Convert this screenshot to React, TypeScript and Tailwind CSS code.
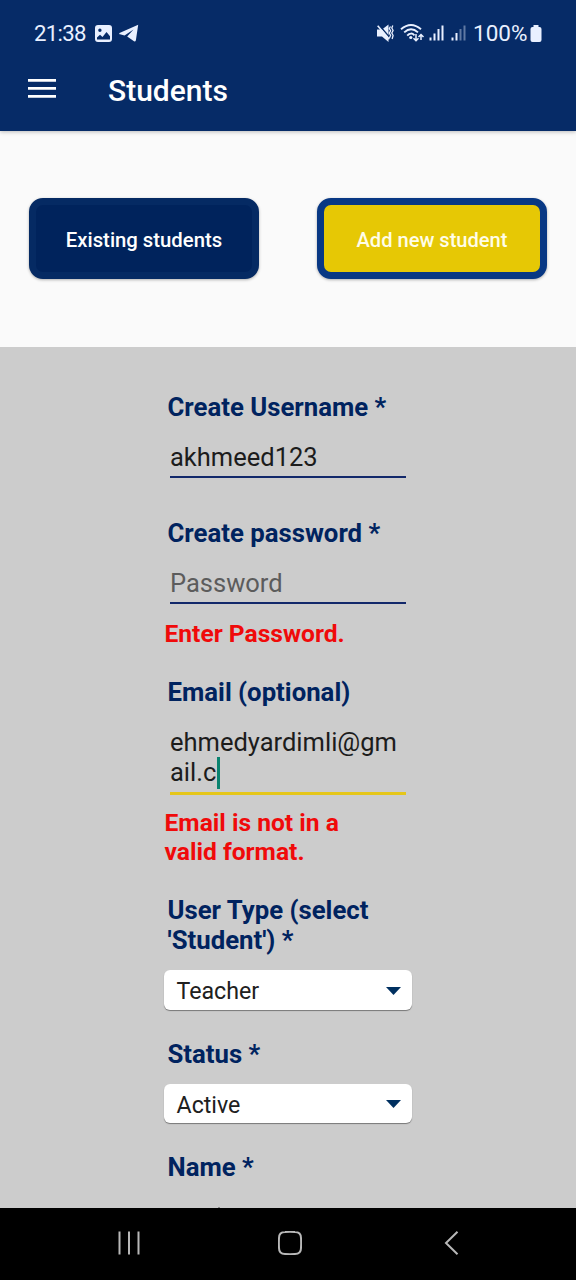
import type { ReactNode } from "react";

function StatusBar() {
  return (
    <div className="flex h-[66px] items-center justify-between pl-[34px] pr-[33px] text-[#e9f0ff]">
      <div className="flex items-center">
        <span className="-mt-px w-[61px] whitespace-nowrap text-[22.200px] leading-[30px] tracking-[-0.700px]">21:38</span>
        <svg width="17" height="17" viewBox="0 0 17 17" fill="currentColor">
          <path fillRule="evenodd" d="M3 0h11a3 3 0 0 1 3 3v11a3 3 0 0 1-3 3H3a3 3 0 0 1-3-3V3a3 3 0 0 1 3-3ZM4.900 3.500a1.700 1.700 0 1 0 0 3.400a1.700 1.700 0 0 0 0-3.400ZM2 14.500h13v-3.300L11.500 7L7.500 12L5 9.800L2 12.500Z" />
        </svg>
        <svg className="ml-[7px]" width="20" height="18" viewBox="0 0 20 18" fill="currentColor">
          <path d="M19.200 .8L.5 9Q-.2 10 1 10.300L5.500 11.500L14.500 5.500L8.200 12.600L15 17.300Q16.400 17.800 16.900 16.200Z" />
        </svg>
      </div>
      <div className="flex items-center">
        <svg width="97" height="24" viewBox="375.500 21 97 24">
          <path fill="currentColor" d="M376.500 29.500h5l6.500-5v17.500l-6.500-5.500h-5Z" />
          <path d="M378.500 25l12 14" stroke="#062b67" strokeWidth="1.500" />
          <path d="M377.200 25.800l11.600 13.500" stroke="currentColor" strokeWidth="1.600" />
          <g fill="none" stroke="currentColor" strokeWidth="1.300">
            <path d="M390 26.500l-1.200 2l1.300 2.300l-1.300 2.300l1.300 2.300l-1.200 2.600" />
            <path d="M392.300 25.500l-1 2.500l1.300 2.500l-1.300 2.500l1.300 2.500l-1 3.500" />
          </g>
          <g fill="none" stroke="currentColor" strokeWidth="1.900">
            <path d="M400.500 29.300Q410.500 20.700 420.500 29.300" />
            <path d="M403.700 32.400Q410.500 26.300 417.500 32.400" />
            <path d="M406.700 35.600Q410.500 31.700 414 35.300" />
          </g>
          <circle cx="410.300" cy="37.500" r="1.600" fill="currentColor" />
          <g fill="none" stroke="currentColor" strokeWidth="1.500">
            <path d="M415.500 34v7M413 38.300l2.500 2.500l2.500-2.500M420.500 40v-5.500M418 37l2.500-2.500l2.500 2.500" />
          </g>
          <g fill="currentColor">
            <path d="M429 37.500h2v3h-2zM433 33.500h2v7h-2zM437 29h2v11.500h-2zM441 25.500h2v15h-2z" />
            <path d="M451 37.500h2v3h-2zM455 33h2v7.500h-2z" />
            <path d="M459 29h2v11.500h-2zM463 25.500h2v15h-2z" opacity=".4" />
          </g>
        </svg>
        <span className="w-[57px] whitespace-nowrap text-[22.500px] leading-[30px]">100%</span>
        <svg className="mr-px" width="12" height="17" viewBox="0 0 12 17" fill="currentColor">
          <path d="M3.500 0h5v2h1A2 2 0 0 1 11.500 4v11a2 2 0 0 1-2 2H2.500a2 2 0 0 1-2-2V4a2 2 0 0 1 2-2h1Z" />
        </svg>
      </div>
    </div>
  );
}

function Label({ children, className = "" }: { children: ReactNode; className?: string }) {
  return <div className={`whitespace-nowrap pb-px pl-[3.500px] text-[25.750px] font-bold leading-[30px] text-[#00235f] ${className}`}>{children}</div>;
}

function FieldError({ children, className = "" }: { children: ReactNode; className?: string }) {
  return <div className={`whitespace-nowrap pl-[0.500px] text-[24.600px] font-bold leading-[29px] text-[#f00a0a] ${className}`}>{children}</div>;
}

function Field({ children, className = "" }: { children: ReactNode; className?: string }) {
  return (
    <div className={`ml-[6px] w-[236px] whitespace-nowrap text-[25.500px] leading-[30px] ${className}`}>{children}</div>
  );
}

function Dropdown({ value, className = "" }: { value: string; className?: string }) {
  return (
    <div className={`flex w-[248px] items-center justify-between rounded-[6px] bg-white pl-[12.500px] pr-[11px] text-[23.200px] text-[#202020] shadow-[0_1px_1px_#777] ${className}`}>
      <span className="pt-[2px] leading-[30px]">{value}</span>
      <svg className="mt-px" width="15" height="8" viewBox="0 0 15 8" fill="#003060">
        <path d="M0 0h15L7.500 8Z" />
      </svg>
    </div>
  );
}

export default function App() {
  return (
    <div className="flex h-[1280px] w-[576px] flex-col overflow-hidden bg-[#fafafa] font-['Roboto',sans-serif]">
      <header className="z-10 h-[131px] shrink-0 bg-[#062b67] shadow-[0_1px_4px_rgba(0,0,0,0.25)]">
        <StatusBar />
        <div className="flex h-[48px] items-center pl-[28px] text-white">
          <svg width="28" height="20" viewBox="0 0 28 20" fill="currentColor" className="-mt-[2px]">
            <path d="M0 0h28v2.700H0zM0 8h28v2.700H0zM0 16h28v2.700H0z" />
          </svg>
          <h1 className="ml-[52px] mt-[2px] text-[30px] font-medium leading-[32px]">Students</h1>
        </div>
      </header>

      <div className="flex h-[216px] shrink-0 justify-between pl-[29px] pr-[29px] pt-[67px]">
        <button className="h-[81px] w-[230px] rounded-[14px] border-[7px] border-[#052a63] bg-[#00235c] pt-[4px] text-[20.300px] font-medium text-white shadow-[0_1px_3px_rgba(0,0,0,0.3)]">
          Existing students
        </button>
        <button className="h-[81px] w-[230px] rounded-[14px] border-[7px] border-[#083884] bg-[#e6c805] pt-[4px] text-[20.100px] font-medium text-[#fffde8] shadow-[0_1px_3px_rgba(0,0,0,0.3)]">
          Add new student
        </button>
      </div>

      <main className="flex h-[861px] shrink-0 flex-col overflow-hidden bg-[#ccc] pl-[164px]">
        <Label className="mt-[45px]">Create Username *</Label>
        <Field className="mt-[19px] h-[36px] border-b-2 border-[#12286a] text-[#1c1c1c]">akhmeed123</Field>
        <Label className="mt-[40px]">Create password *</Label>
        <Field className="mt-[19px] h-[36px] border-b-2 border-[#12286a] text-[#5c5c5c]">Password</Field>
        <FieldError className="mt-[15px]">Enter Password.</FieldError>
        <Label className="mt-[29px]">Email (optional)</Label>
        <Field className="mt-[19px] h-[68px] border-b-[3px] border-[#e5c619] text-[#1c1c1c]">
          <div>ehmedyardimli@gm</div>
          <div className="flex">
            <span>ail.c</span>
            <span className="ml-[0.500px] h-[32px] w-[3px] bg-[#09836f]" />
          </div>
        </Field>
        <FieldError className="mt-[13px]">
          Email is not in a<br />valid format.
        </FieldError>
        <Label className="mt-[29px]">
          User Type (select<br />'Student') *
        </Label>
        <Dropdown value="Teacher" className="mt-[14px] h-[40px]" />
        <Label className="mt-[29px]">Status *</Label>
        <Dropdown value="Active" className="mt-[14px] h-[39px]" />
        <Label className="mt-[29px]">Name *</Label>
        <div className="ml-[54px] mt-[24px] h-px w-[2px] bg-[#888]" />
      </main>

      <nav className="flex h-[72px] shrink-0 items-center bg-black pb-[2px] pl-[117px] text-[#b8b8b8]">
        <svg width="24" height="24" viewBox="0 0 24 24" fill="none" stroke="currentColor" strokeWidth="2">
          <path d="M2.500 .5v23M12 .5v23M21.500 .5v23" />
        </svg>
        <svg className="ml-[137px]" width="24" height="24" viewBox="0 0 24 24" fill="none" stroke="currentColor" strokeWidth="2">
          <path d="M7 1Q12 .7 17 1Q23 1 23 7Q23.300 12 23 17Q23 23 17 23Q12 23.300 7 23Q1 23 1 17Q.7 12 1 7Q1 1 7 1Z" />
        </svg>
        <svg className="ml-[141px]" width="16" height="24" viewBox="0 0 16 24" fill="none" stroke="currentColor" strokeWidth="2">
          <path d="M14.500 .8L3 12L14.500 23.200" />
        </svg>
      </nav>
    </div>
  );
}
